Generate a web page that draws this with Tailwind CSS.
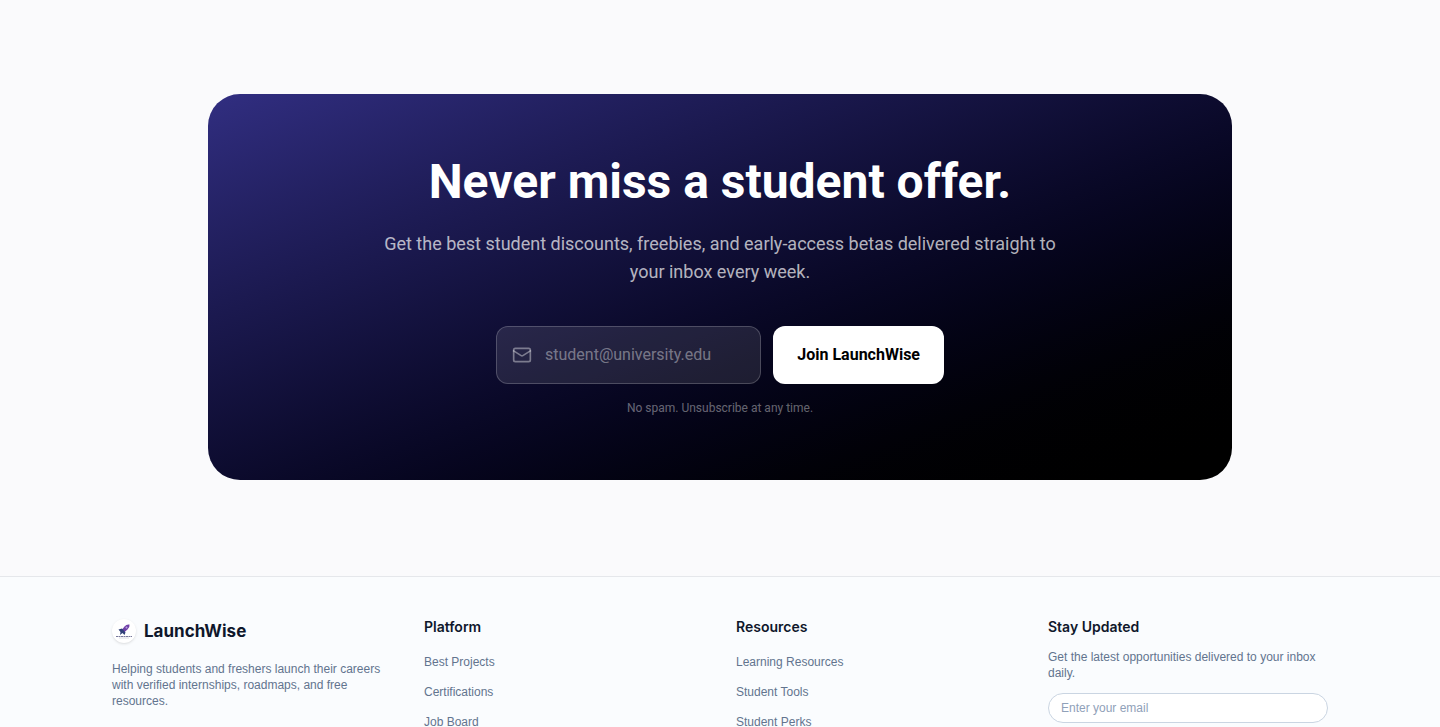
<!DOCTYPE html>
<html lang="en">
<head>
    <meta charset="UTF-8">
    <meta name="viewport" content="width=device-width, initial-scale=1.0">
    <title>LaunchWise</title>
    <script src="https://cdn.jsdelivr.net/npm/@tailwindcss/browser@4"></script>
</head>
<body class="bg-[#fafafc] font-['Liberation_Sans',sans-serif]">
    <section class="px-6 pt-[94px] pb-24 font-[Roboto,sans-serif]">
        <div class="max-w-5xl mx-auto rounded-[32px] bg-linear-to-br from-[#312e81] to-black px-6 py-16 text-center">
            <h2 class="text-5xl font-bold text-white">Never miss a student offer.</h2>
            <p class="max-w-2xl mx-auto mt-6 text-lg leading-7 text-white/70">Get the best student discounts, freebies, and early-access betas delivered straight to your inbox every week.</p>
            <form class="flex max-w-md mx-auto mt-10 gap-3">
                <div class="relative flex-1 min-w-0">
                    <svg class="absolute left-4 top-1/2 -translate-y-1/2 w-5 h-5 text-white/40" viewBox="0 0 24 24" fill="none" stroke="currentColor" stroke-width="2" stroke-linecap="round" stroke-linejoin="round">
                        <rect width="20" height="16" x="2" y="4" rx="2"/>
                        <path d="m22 7-8.97 5.7a1.94 1.94 0 0 1-2.06 0L2 7"/>
                    </svg>
                    <input type="email" aria-label="Student email" placeholder="student@university.edu" class="w-full rounded-xl border border-white/20 bg-white/10 py-4 pl-12 pr-4 text-white placeholder:text-white/40">
                </div>
                <button type="submit" class="rounded-xl bg-white px-6 py-4 font-bold text-black">Join LaunchWise</button>
            </form>
            <p class="mt-4 text-xs text-white/40">No spam. Unsubscribe at any time.</p>
        </div>
    </section>

    <footer class="border-t border-gray-200 bg-[#fafcfe] px-8 pt-10 pb-12">
        <div class="max-w-[1216px] mx-auto grid grid-cols-4 gap-8">
            <div>
                <a href="#" class="flex items-center gap-2">
                    <svg class="w-6 h-6 rounded-full bg-white shadow" viewBox="0 0 24 24">
                        <path d="M9 12 12.500 7.500Q14.500 5 17.500 5.500Q18 8.500 15.500 10.500L11.500 14Z" fill="#7040a8"/>
                        <path d="M6.500 10.500 10 9.500 13.500 13.500 12.500 16 10.500 14 8 16 8.500 13Z" fill="#2f3f78"/>
                        <circle cx="14.500" cy="8.500" r="1" fill="#b9a2dc"/>
                        <path d="M4 17.500h16" stroke="#77779a" stroke-width="1" stroke-dasharray="2 .5"/>
                        <path d="M7 19h10" stroke="#c5c7d5" stroke-width=".6"/>
                    </svg>
                    <span class="text-[17px] leading-7 font-bold text-slate-900 font-[Inter,sans-serif]">LaunchWise</span>
                </a>
                <p class="mt-4 text-xs text-slate-500">Helping students and freshers launch their careers with verified internships, roadmaps, and free resources.</p>
            </div>
            <nav aria-label="Platform">
                <h3 class="text-sm font-semibold text-slate-900 font-[Inter,sans-serif]">Platform</h3>
                <ul class="mt-4 space-y-3 text-xs leading-[18px] text-slate-500">
                    <li><a href="#">Best Projects</a></li>
                    <li><a href="#">Certifications</a></li>
                    <li><a href="#">Job Board</a></li>
                </ul>
            </nav>
            <nav aria-label="Resources">
                <h3 class="text-sm font-semibold text-slate-900 font-[Inter,sans-serif]">Resources</h3>
                <ul class="mt-4 space-y-3 text-xs leading-[18px] text-slate-500">
                    <li><a href="#">Learning Resources</a></li>
                    <li><a href="#">Student Tools</a></li>
                    <li><a href="#">Student Perks</a></li>
                </ul>
            </nav>
            <div>
                <h3 class="text-sm font-semibold text-slate-900 font-[Inter,sans-serif]">Stay Updated</h3>
                <p class="mt-3 text-xs text-slate-500">Get the latest opportunities delivered to your inbox daily.</p>
                <input type="email" aria-label="Email address" placeholder="Enter your email" class="mt-3 w-full rounded-full border border-slate-300 bg-white px-3 py-1.5 text-xs placeholder:text-slate-400">
            </div>
        </div>
    </footer>
</body>
</html>
